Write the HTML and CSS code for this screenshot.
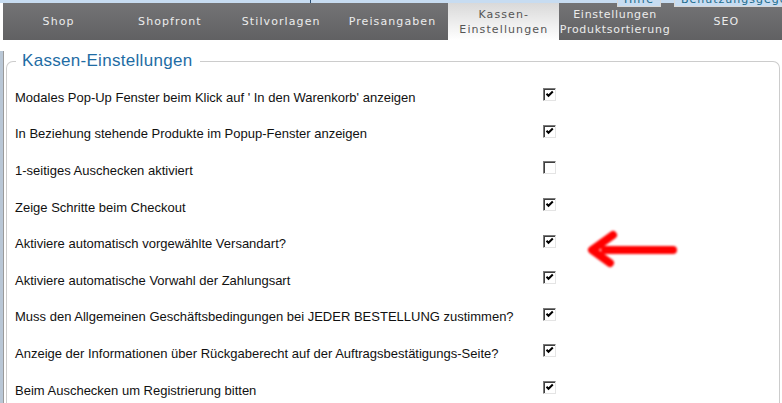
FILE: index.html
```html
<!DOCTYPE html>
<html lang="de">
<head>
<meta charset="utf-8">
<title>Kassen-Einstellungen</title>
<link rel="stylesheet" href="styles.css">
</head>
<body>
<div class="frame">
  <div class="topstrip"><span class="topseg"></span></div>
  <div class="hdrlink hl-help">Hilfe</div>
  <div class="hdrlink hl-use">Benutzungsgegenstände</div>
  <nav class="tabs">
    <a class="tab">Shop</a>
    <a class="tab">Shopfront</a>
    <a class="tab">Stilvorlagen</a>
    <a class="tab">Preisangaben</a>
    <a class="tab active">Kassen-<br>Einstellungen</a>
    <a class="tab tight">Einstellungen<br>Produktsortierung</a>
    <a class="tab">SEO</a>
  </nav>
  <div class="main">
    <fieldset class="box">
      <legend class="legend">Kassen-Einstellungen</legend>
      <div class="rows">
        <div class="row"><span class="lbl">Modales Pop-Up Fenster beim Klick auf ' In den Warenkorb' anzeigen</span><span class="cb on"></span></div>
        <div class="row"><span class="lbl">In Beziehung stehende Produkte im Popup-Fenster anzeigen</span><span class="cb on"></span></div>
        <div class="row"><span class="lbl">1-seitiges Auschecken aktiviert</span><span class="cb"></span></div>
        <div class="row"><span class="lbl">Zeige Schritte beim Checkout</span><span class="cb on"></span></div>
        <div class="row"><span class="lbl">Aktiviere automatisch vorgewählte Versandart?</span><span class="cb on"></span></div>
        <div class="row"><span class="lbl">Aktiviere automatische Vorwahl der Zahlungsart</span><span class="cb on"></span></div>
        <div class="row"><span class="lbl">Muss den Allgemeinen Geschäftsbedingungen bei JEDER BESTELLUNG zustimmen?</span><span class="cb on"></span></div>
        <div class="row"><span class="lbl">Anzeige der Informationen über Rückgaberecht auf der Auftragsbestätigungs-Seite?</span><span class="cb on"></span></div>
        <div class="row"><span class="lbl">Beim Auschecken um Registrierung bitten</span><span class="cb on"></span></div>
      </div>
    </fieldset>
    <svg class="arrow" width="110" height="50" viewBox="0 0 110 50" aria-hidden="true">
      <defs><filter id="soft" x="-20%" y="-50%" width="140%" height="200%"><feGaussianBlur stdDeviation="1.1"/></filter></defs>
      <g fill="none" stroke="#ff0000" stroke-width="8" stroke-linecap="round" stroke-linejoin="round" filter="url(#soft)">
        <path d="M30 7 L9 22 L27 35"/>
        <path d="M22 22 L90 22"/>
      </g>
    </svg>
  </div>
</div>
</body>
</html>
```

FILE: styles.css
```css
html, body { margin: 0; padding: 0; background: #fff; }
body { width: 782px; height: 403px; overflow: hidden; font-family: "Liberation Sans", Arial, sans-serif; }

.frame { position: relative; width: 782px; height: 403px; overflow: hidden; }

.topstrip { height: 3px; background: #c7dcf1; display: flex; }
.topseg { width: 310px; border-right: 1px solid #2d4f72; }

.hdrlink { position: absolute; top: -7px; height: 12px; border: 1px solid #d8d8d8; background: #c7dcf1; color: #1b6b8c; font: 11px "DejaVu Sans", Verdana, sans-serif; letter-spacing: 1px; line-height: 12px; padding: 0 6px; overflow: hidden; white-space: nowrap; z-index: 2; }
.hl-help { left: 617px; width: 30px; }
.hl-use { left: 674px; width: 120px; border-right: none; }

.tabs { display: grid; grid-template-columns: repeat(7, 1fr); height: 37px; margin-left: 3px; background: linear-gradient(#737375, #616163); }
.tab { display: flex; align-items: center; justify-content: center; text-align: center; font: 11px/15px "DejaVu Sans", Verdana, sans-serif; letter-spacing: 1.1px; color: #ececec; white-space: nowrap; cursor: default; }
.tab.tight { letter-spacing: 0.7px; }
.tab.active { background: linear-gradient(#d9d9d9, #ffffff); color: #555; }

.main { position: relative; height: 363px; border-left: 3px solid #b9c7d6; box-shadow: inset 1px 0 #9a9a9a; }

.box { margin: 11px 2px 0 3px; padding: 6px 0 0 8px; border: 1px solid #cccccc; border-bottom: none; border-radius: 7px 7px 0 0; min-height: 360px; box-sizing: border-box; }
.legend { margin-left: 1px; padding: 0 8px 0 6px; font-size: 17px; line-height: 20px; color: #1e6ca4; letter-spacing: 0.3px; }

.rows { display: flex; flex-direction: column; }
.row { display: grid; grid-template-columns: 528px 13px; align-items: center; height: 36.6px; }
.lbl { font-size: 13px; color: #111; white-space: nowrap; padding-top: 4px; }

.cb { width: 13px; height: 13px; box-sizing: border-box; border: 1px solid; border-color: #7a7a7a #e4e4e4 #e4e4e4 #7a7a7a; box-shadow: inset 1px 1px #3f3f3f; background: #fff; margin-bottom: 1px; }
.cb.on { background: #fff url("data:image/svg+xml,%3Csvg xmlns='http://www.w3.org/2000/svg' width='11' height='11' viewBox='0 0 11 11'%3E%3Cpath d='M2.5 4.8 L4.5 6.8 L8.8 2.5' fill='none' stroke='%23000' stroke-width='2'/%3E%3C/svg%3E") no-repeat 0 0; }

.arrow { position: absolute; left: 580px; top: 177px; }
```
